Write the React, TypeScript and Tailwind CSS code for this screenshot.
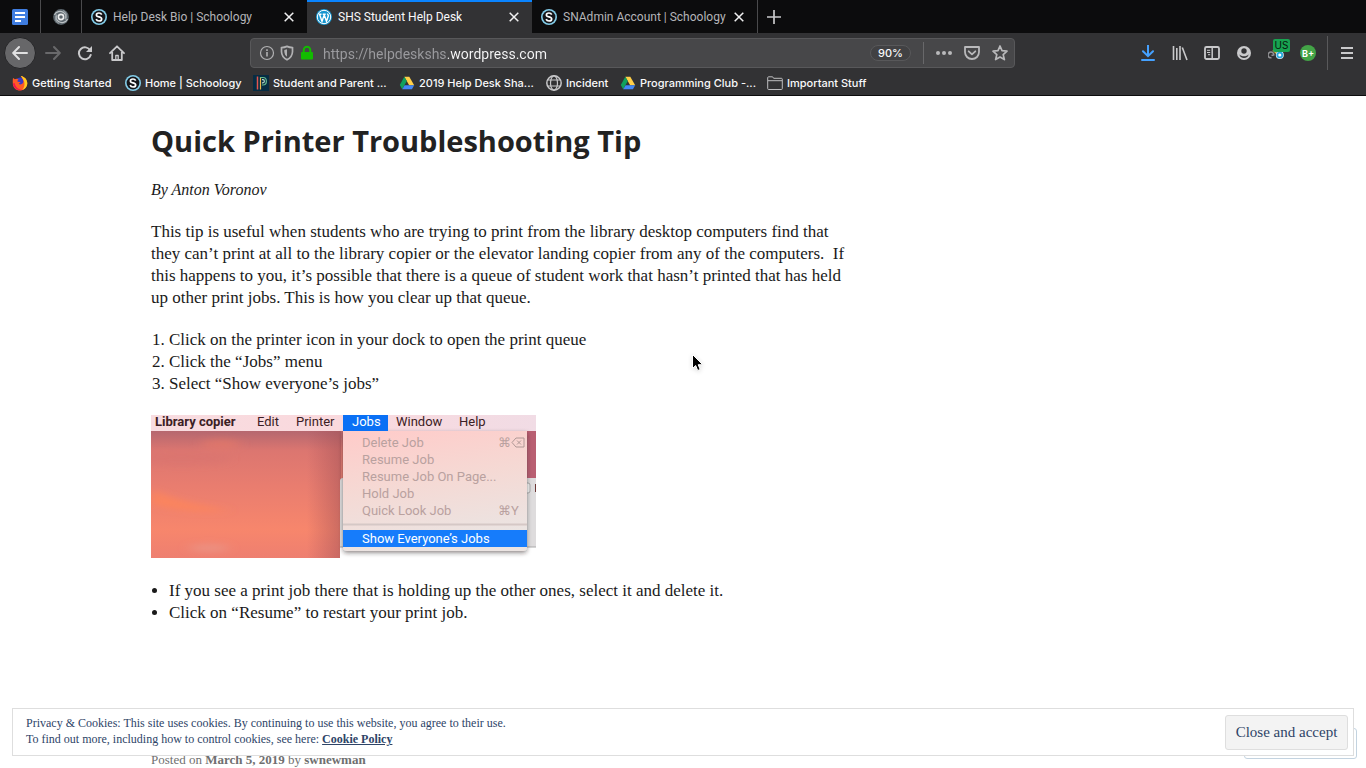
import type { ReactNode } from "react";

function DocsIcon() {
  return (
    <svg width="16" height="16" viewBox="0 0 16 16" aria-hidden="true">
      <rect width="16" height="16" rx="1.5" fill="#3f7de0" />
      <path d="M3 3h10v2H3zM3 7h10v2H3zM3 11h6v2H3z" fill="#fff" />
    </svg>
  );
}

function SwirlIcon() {
  return (
    <svg width="16" height="16" viewBox="0 0 16 16" aria-hidden="true">
      <circle cx="8" cy="8" r="7.900" fill="#5b656c" />
      <g fill="none" strokeWidth="1.200">
        <circle cx="8" cy="8" r="2.600" stroke="#eceded" strokeWidth="1.600" />
        <path d="M1.500 6C3 2.500 7.500 1.500 10.500 3.500c2.500 1.700 2.700 4.500 1.500 6.500M14.500 10c-1.500 3.500-6 4.500-9 2.500C3 10.800 2.800 8 4 6" stroke="#bbc1c4" />
        <path d="M6 14.500C2.500 13 1.500 9 3.500 5.500M10 1.500c3.500 1.500 4.500 5.500 2.500 9" stroke="#929a9f" />
      </g>
    </svg>
  );
}

function SchoologyIcon() {
  return (
    <svg width="16" height="16" viewBox="0 0 16 16" aria-hidden="true">
      <circle cx="8" cy="8" r="8" fill="#83cde9" />
      <circle cx="8" cy="8" r="6.4" fill="#15161a" />
      <path d="M10.7 5.7C10.1 4.5 9.2 4 8 4 6.5 4 5.4 4.8 5.4 5.9c0 2.7 5.3 1.3 5.3 4.1C10.7 11.2 9.6 12 8 12c-1.400 0-2.400-.6-2.900-1.800" fill="none" stroke="#fff" strokeWidth="1.7" />
    </svg>
  );
}

function WordPressIcon() {
  return (
    <svg width="16" height="16" viewBox="0 0 16 16" aria-hidden="true">
      <circle cx="8" cy="8" r="8" fill="#1795cf" />
      <circle cx="8" cy="8" r="6.700" fill="none" stroke="#fff" strokeWidth="1" />
      <path d="M2.700 5.200h2.800M3.500 5.300l2.500 7 2-5.800M6.700 5.200h3M8 5.300l2.500 7 1.800-5.200c.3-1-.8-1.700-.8-2.600" fill="none" stroke="#fff" strokeWidth="1.400" />
    </svg>
  );
}

function FirefoxIcon() {
  return (
    <svg width="16" height="16" viewBox="0 0 16 16" aria-hidden="true">
      <circle cx="8.300" cy="8.500" r="6" fill="#3b3bc4" />
      <path d="M1 3c.6.2 1.300.7 1.800 1.200C4 3.300 5.600 3.500 6.500 4.500 5.500 5 5.300 6 5.700 6.700c1 .2 2 .1 2.800.2-.2 1-1.300 1.200-1.800 1.700.8 1.500 3.300.8 4.300-.6.8-1.600.2-3.600-1-5L8.800 1c4 .6 6.600 3.800 6.500 7.600-.2 4-3.300 7-7.200 7C3.900 15.600.8 12.500.8 8.500.8 6.500.6 5 1 3z" fill="#ff5a26" />
      <path d="M8.800 1c4 .6 6.600 3.800 6.500 7.600-.2 3-2 5.500-5 6.500 2.800-3.600 3-7.600.3-11.600z" fill="#ffcb20" />
      <path d="M1 8.500c.3 5 5 7.500 9.300 6.500C6.500 14.500 3.400 12.300 2.600 8z" fill="#f0154f" />
    </svg>
  );
}

function PowerSchoolIcon() {
  return (
    <svg width="16" height="16" viewBox="0 0 16 16" aria-hidden="true">
      <rect width="16" height="16" fill="#062c43" />
      <g fill="none" strokeWidth="1.200">
        <path d="M4.500 1.500v13" stroke="#e5554f" strokeWidth="1.500" />
        <path d="M7.500 2v12.500" stroke="#e9b84a" />
        <path d="M7 2.500h3c4.500 0 4.500 7.500 0 7.500H9" stroke="#65b98e" />
        <path d="M9 4.700h1c1.800 0 1.800 3.100 0 3.100H9" stroke="#b6d8ca" />
      </g>
    </svg>
  );
}

function DriveIcon() {
  return (
    <svg width="16" height="16" viewBox="0 0 16 16" aria-hidden="true">
      <path d="M5.300 1.800h5L15.200 10.300h-5z" fill="#ffcf48" />
      <path d="M5.300 1.800 7.800 6.100 3.200 14.300.8 10.100z" fill="#11a05c" />
      <path d="M5.600 10.200h9.600l-2.300 4.100H3.200z" fill="#4387f5" />
    </svg>
  );
}

function GlobeIcon() {
  return (
    <svg width="16" height="16" viewBox="0 0 16 16" fill="none" stroke="#c7c7c9" strokeWidth="1.200" aria-hidden="true">
      <circle cx="8" cy="8" r="7.200" strokeWidth="1.500" />
      <ellipse cx="8" cy="8" rx="3.500" ry="7.200" />
      <path d="M1.500 5h13M1.500 11h13" />
    </svg>
  );
}

function FolderIcon() {
  return (
    <svg width="16" height="16" viewBox="0 0 16 16" fill="none" stroke="#bdbdbf" aria-hidden="true">
      <path d="M.7 13.500V2.700q0-.9.9-.9h4l1 1.500h7.800q.9 0 .9.900v9.300q0 1-.9 1H1.600q-.9 0-.9-1zM1 5.700h14" />
    </svg>
  );
}

function CloseIcon() {
  return (
    <svg width="10" height="10" viewBox="0 0 10 10" aria-hidden="true">
      <path d="m.7.7 8.600 8.600M9.300.7.7 9.300" stroke="#f1f1f2" strokeWidth="1.500" />
    </svg>
  );
}

function Tab({ icon, label, active = false }: { icon: ReactNode; label: string; active?: boolean }) {
  return (
    <div
      className={
        active
          ? "flex w-[225px] items-center border-t-2 border-[#0a84ff] bg-[#323234] pr-[11px] pb-0.5 pl-[9px] text-[#f9f9fa]"
          : "flex w-[225px] items-center pr-[11px] pl-[9px] text-[#b5b5b8]"
      }
    >
      <button role="tab" aria-selected={active} className="flex min-w-0 flex-1 items-center gap-1.5">
        {icon}
        <span className="truncate">{label}</span>
      </button>
      <button aria-label={`Close ${label}`} className="p-0.5">
        <CloseIcon />
      </button>
    </div>
  );
}

function TabStrip() {
  return (
    <div role="tablist" className="flex h-[33px] bg-[#0c0c0d] font-[Roboto,sans-serif] text-[12px]">
      <button role="tab" aria-selected={false} aria-label="Docs" className="flex w-[41px] items-center justify-center border-r border-[#4a4a4c]">
        <DocsIcon />
      </button>
      <button role="tab" aria-selected={false} aria-label="Pinned page" className="flex w-[41px] items-center justify-center border-r border-[#4a4a4c]">
        <SwirlIcon />
      </button>
      <Tab icon={<SchoologyIcon />} label="Help Desk Bio | Schoology" />
      <Tab icon={<WordPressIcon />} label="SHS Student Help Desk" active />
      <Tab icon={<SchoologyIcon />} label="SNAdmin Account | Schoology" />
      <button aria-label="New tab" className="flex w-8 items-center justify-center border-l border-[#4a4a4c]">
        <svg width="14" height="14" viewBox="0 0 14 14" aria-hidden="true">
          <path d="M7 0v14M0 7h14" stroke="#c9c9cb" strokeWidth="1.700" />
        </svg>
      </button>
    </div>
  );
}

function ToolButton({ label, children }: { label: string; children: ReactNode }) {
  return (
    <button aria-label={label} className="flex w-8 items-center justify-center">
      {children}
    </button>
  );
}

function AddressBar() {
  return (
    <div className="ml-[117px] flex h-[30px] min-w-0 flex-1 items-center rounded-sm border border-[#58585a] bg-[#474749] pl-2">
      <button aria-label="Site information" className="flex items-center gap-1">
        <svg width="16" height="16" viewBox="0 0 16 16" fill="none" stroke="#b1b1b3" aria-hidden="true">
          <circle cx="8" cy="8" r="6.500" strokeWidth="1.200" />
          <path d="M8 7v4.500M8 4.200V6" strokeWidth="1.600" />
        </svg>
        <svg width="16" height="16" viewBox="0 0 16 16" aria-hidden="true">
          <path d="M2.500 2.700Q5.500 2.500 8 1.400q2.500 1.100 5.500 1.300v4Q13.300 12 8 14.800 2.700 12 2.500 6.700z" fill="none" stroke="#b1b1b3" strokeWidth="1.700" />
          <path d="M8 4.300v7.500Q5.500 10 5.300 7V5z" fill="#b1b1b3" />
        </svg>
        <svg width="16" height="16" viewBox="0 0 16 16" aria-hidden="true">
          <path d="M4.700 8V5a3.300 3.300 0 0 1 6.600 0v3" fill="none" stroke="#12bc00" strokeWidth="2" />
          <rect x="2" y="7" width="12" height="7.500" rx="1" fill="#12bc00" />
        </svg>
      </button>
      <input
        aria-label="Address"
        defaultValue="https://helpdeskshs.wordpress.com"
        className="ml-2 h-7 min-w-0 flex-1 bg-[linear-gradient(90deg,#9b9b9f_125px,#f9f9fa_125px)] bg-clip-text pt-0.5 font-[Roboto,sans-serif] text-[14px] text-transparent outline-none"
      />
      <button className="h-4 w-[41px] rounded-full border border-[#58585a] bg-[#414143] text-[11px] leading-[14px] font-medium text-[#f9f9fa]">
        90%
      </button>
      <div className="ml-3 h-[22px] w-px bg-[#68686a]" />
      <div className="flex items-center gap-3 pr-1.5 pl-3">
        <button aria-label="Page actions">
          <svg width="16" height="16" viewBox="0 0 16 16" fill="#b9b9bb" aria-hidden="true">
            <circle cx="2" cy="8" r="2" />
            <circle cx="8" cy="8" r="2" />
            <circle cx="14" cy="8" r="2" />
          </svg>
        </button>
        <button aria-label="Save to Pocket">
          <svg width="16" height="16" viewBox="0 0 16 16" fill="none" stroke="#b9b9bb" strokeWidth="1.800" strokeLinecap="round" strokeLinejoin="round" aria-hidden="true">
            <path d="M1 2h14v5c0 4-3 7-7 7S1 11 1 7z" />
            <path d="m4.700 6.300 3.300 3 3.300-3" />
          </svg>
        </button>
        <button aria-label="Bookmark this page">
          <svg width="16" height="16" viewBox="0 0 16 16" fill="none" stroke="#b9b9bb" strokeWidth="1.700" strokeLinejoin="round" aria-hidden="true">
            <path d="m8 1 2 4.700 5 .5-3.800 3.400 1.200 5L8 12l-4.400 2.600 1.200-5L1 6.200l5-.5z" />
          </svg>
        </button>
      </div>
    </div>
  );
}

function Toolbar() {
  return (
    <div className="flex h-10 items-center pl-1">
      <button aria-label="Back" className="mr-px flex size-8 items-center justify-center rounded-full border border-[#252527] bg-[#676769]">
        <svg width="16" height="16" viewBox="0 0 16 16" fill="none" stroke="#e0e0e1" strokeWidth="2" strokeLinecap="round" strokeLinejoin="round" aria-hidden="true">
          <path d="M15 8H1.500M7 2 1.200 8 7 14" />
        </svg>
      </button>
      <ToolButton label="Forward">
        <svg width="16" height="16" viewBox="0 0 16 16" fill="none" stroke="#69696b" strokeWidth="2" strokeLinecap="round" strokeLinejoin="round" aria-hidden="true">
          <path d="M1 8h13.500M9 2l5.800 6L9 14" />
        </svg>
      </ToolButton>
      <ToolButton label="Reload">
        <svg width="16" height="16" viewBox="0 0 16 16" fill="none" stroke="#c9c9cb" strokeWidth="2" aria-hidden="true">
          <path d="M13.200 5.400A6 6 0 1 0 13.700 10" strokeLinecap="round" />
          <path d="M15 1v6H9z" fill="#c9c9cb" stroke="none" />
        </svg>
      </ToolButton>
      <ToolButton label="Home">
        <svg width="16" height="16" viewBox="0 0 16 16" fill="none" stroke="#c9c9cb" strokeWidth="1.800" strokeLinecap="round" strokeLinejoin="round" aria-hidden="true">
          <path d="M1 8.200 8 1.300l7 6.900M3.200 7v8h9.600V7" />
          <path d="M6.800 15v-4.500h2.400V15" strokeWidth="1.300" />
        </svg>
      </ToolButton>
      <AddressBar />
      <div className="ml-[117px] flex h-full items-center">
        <ToolButton label="Downloads">
          <svg width="14" height="16" viewBox="0 0 14 16" fill="none" stroke="#45a1ff" strokeWidth="2" aria-hidden="true">
            <path d="M7 0v11M2 6.200l5 5 5-5M1 15h12" strokeLinecap="round" />
          </svg>
        </ToolButton>
        <ToolButton label="Library">
          <svg width="16" height="16" viewBox="0 0 16 16" stroke="#c9c9cb" strokeWidth="1.600" aria-hidden="true">
            <path d="M1.500 1v14M4.800 3v12M8 1v14M10.300 2.500 15 15" />
          </svg>
        </ToolButton>
        <ToolButton label="Sidebars">
          <svg width="16" height="16" viewBox="0 0 16 16" fill="none" stroke="#c9c9cb" aria-hidden="true">
            <rect x="1" y="2" width="14" height="12" rx="1.500" strokeWidth="1.800" />
            <path d="M8.200 2v12" strokeWidth="1.500" />
            <path d="M3 5.300h3.200M3 7.500h3.200M4 9.700h2.200" />
          </svg>
        </ToolButton>
        <ToolButton label="Account">
          <svg width="16" height="16" viewBox="0 0 16 16" aria-hidden="true">
            <circle cx="8" cy="8" r="7" fill="#c9c9cb" />
            <circle cx="8" cy="6" r="2.700" fill="#323234" />
            <path d="M3.500 9.200C5 12 11 12 12.500 9.200c0 5-9 5-9 0z" fill="#323234" />
          </svg>
        </ToolButton>
        <button aria-label="Proxy extension, US" className="relative flex w-8 items-center justify-center">
          <svg width="16" height="16" viewBox="0 0 16 16" aria-hidden="true">
            <path d="M3.500 12.800a2.900 2.900 0 1 1 2.300-2.500M3.500 10.200h2" fill="none" stroke="#929295" strokeWidth="1.500" />
            <path d="m5 5 4 4 3-3" stroke="#d6bc3f" fill="none" strokeWidth="1.500" />
            <circle cx="11.800" cy="10" r="4" fill="#d3eefa" />
            <circle cx="11.800" cy="10" r="2.400" fill="#fff" stroke="#27a9dc" strokeWidth="1.700" />
          </svg>
          <span className="absolute -top-1.5 left-[13px] h-[13px] w-[17px] rounded-[2px] bg-[#18a351] text-[10px] leading-[13px] text-[#06180d]">US</span>
        </button>
        <button aria-label="Grade extension" className="mx-2 flex size-4 items-center justify-center rounded-full bg-[#43a447] text-[9px] leading-none font-bold text-white">
          B+
        </button>
        <div className="ml-[3px] h-[34px] w-px bg-[#59595b]" />
        <button aria-label="Open menu" className="mr-[13px] ml-[13px]">
          <svg width="12" height="12" viewBox="0 0 12 12" stroke="#c9c9cb" strokeWidth="1.800" aria-hidden="true">
            <path d="M0 1h12M0 6h12M0 11h12" />
          </svg>
        </button>
      </div>
    </div>
  );
}

const bookmarks = [
  { label: "Getting Started", icon: <FirefoxIcon />, width: "w-[113px]" },
  { label: "Home | Schoology", icon: <SchoologyIcon />, width: "w-[128px]" },
  { label: "Student and Parent ...", icon: <PowerSchoolIcon />, width: "w-[146px]" },
  { label: "2019 Help Desk Sha...", icon: <DriveIcon />, width: "w-[147px]" },
  { label: "Incident", icon: <GlobeIcon />, width: "w-[74px]" },
  { label: "Programming Club -...", icon: <DriveIcon />, width: "w-[147px]" },
  { label: "Important Stuff", icon: <FolderIcon />, width: "w-[113px]" },
];

function BookmarksBar() {
  return (
    <nav aria-label="Bookmarks" className="flex h-[22px] items-center pb-0.5 pl-3 text-[11px] font-medium text-[#f9f9fa]">
      {bookmarks.map(({ label, icon, width }) => (
        <a key={label} href="#bookmark" className={`flex shrink-0 items-center gap-1 whitespace-nowrap ${width}`}>
          {icon}
          {label}
        </a>
      ))}
    </nav>
  );
}

function MenuIllustration() {
  return (
    <svg width="385" height="143" viewBox="0 0 385 143" role="img" aria-label="Jobs menu with Show Everyone's Jobs selected" className="mt-5 block font-[Roboto,sans-serif]">
      <defs>
        <linearGradient id="sky" x1="0" y1="0" x2="0" y2="1">
          <stop offset=".1" stopColor="#b2666f" />
          <stop offset=".25" stopColor="#dc7670" />
          <stop offset=".5" stopColor="#e97d6f" />
          <stop offset=".8" stopColor="#f7866c" />
          <stop offset="1" stopColor="#ee7f70" />
        </linearGradient>
        <linearGradient id="edge" x1="0" y1="0" x2="1" y2="0">
          <stop offset=".82" stopColor="#a45058" stopOpacity="0" />
          <stop offset="1" stopColor="#a05055" stopOpacity=".5" />
        </linearGradient>
        <linearGradient id="menu" x1="0" y1="0" x2=".25" y2="1">
          <stop offset="0" stopColor="#ffcbc9" />
          <stop offset=".5" stopColor="#f5d9d4" />
          <stop offset="1" stopColor="#ebe4e2" />
        </linearGradient>
        <linearGradient id="bar" x1="0" y1="0" x2="1" y2="0">
          <stop offset="0" stopColor="#f8dce0" />
          <stop offset=".5" stopColor="#fad9dd" />
          <stop offset="1" stopColor="#f1dce5" />
        </linearGradient>
        <filter id="blur" x="-50%" y="-100%" width="200%" height="300%">
          <feGaussianBlur stdDeviation="6 3" />
        </filter>
        <filter id="shadow" x="-10%" y="-10%" width="120%" height="125%">
          <feDropShadow dx="0" dy="2" stdDeviation="2" floodColor="#252020" floodOpacity=".5" />
        </filter>
      </defs>
      <rect width="385" height="143" fill="url(#sky)" />
      <g filter="url(#blur)">
        <path d="M0 74q20 10 50 16t30 5q-30 5-80-5z" fill="#ff865a" opacity=".75" />
        <ellipse cx="70" cy="29" rx="20" ry="5" fill="#ee7a66" opacity=".5" />
        <ellipse cx="30" cy="44" rx="50" ry="7" fill="#d7726f" opacity=".4" />
        <ellipse cx="58" cy="133" rx="20" ry="4" fill="#ea9789" opacity=".7" />
      </g>
      <rect width="190" height="143" fill="url(#edge)" />
      <rect x="372" y="16" width="13" height="49" fill="#b95f72" />
      <path d="M189 143V66q0-3 3-3h193v80z" fill="#dedcdd" />
      <path d="M189 132h196v11H189z" fill="#fff" />
      <path d="M189 132h196" stroke="#aaa" />
      <rect x="372" y="68" width="7" height="10" rx="2" fill="#f3f3f3" stroke="#a9a9a9" />
      <path d="M384.500 69v8" stroke="#6c3836" />
      <rect width="385" height="16" fill="url(#bar)" />
      <path d="M192 16h184v116q0 4-4 4H196q-4 0-4-4z" fill="url(#menu)" filter="url(#shadow)" />
      <path d="M192 0h45v16h-45z" fill="#0a70f5" />
      <path d="M192 109.500h184" stroke="#d5c8c6" strokeWidth="2" />
      <path d="M192 115h184v17H192z" fill="#167cfb" />
      <g fontSize="13" fill="#3b2024">
        <text x="4" y="11" fontWeight="700">Library copier</text>
        <text x="106" y="11">Edit</text>
        <text x="145" y="11">Printer</text>
        <text x="201" y="11" fill="#fff">Jobs</text>
        <text x="245" y="11">Window</text>
        <text x="308" y="11">Help</text>
      </g>
      <g fontSize="13" fill="#b9a19f">
        <text x="211" y="32">Delete Job</text>
        <text x="211" y="49">Resume Job</text>
        <text x="211" y="66">Resume Job On Page...</text>
        <text x="211" y="83">Hold Job</text>
        <text x="211" y="100">Quick Look Job</text>
        <text x="347" y="32">⌘</text>
        <text x="347" y="100">⌘Y</text>
        <text x="211" y="128" fill="#fff">Show Everyone’s Jobs</text>
      </g>
      <path d="m361 27.500 4-4.500h8v9h-8zM366 25.500l4 4M370 25.500l-4 4" fill="none" stroke="#b09896" />
    </svg>
  );
}

function Article() {
  return (
    <article className="ml-[151px] max-w-[700px] pt-[27px] text-[17px] leading-[22px] text-[#1a1a1a]">
      <h1 className="font-['Open_Sans',sans-serif] text-[29px] leading-9 font-bold text-[#222]">Quick Printer Troubleshooting Tip</h1>
      <p className="mt-5 text-[16px] leading-[22px] italic">By Anton Voronov</p>
      <p className="mt-5 whitespace-nowrap">
        This tip is useful when students who are trying to print from the library desktop computers find that
        <br />
        they can’t print at all to the library copier or the elevator landing copier from any of the computers.&nbsp; If
        <br />
        this happens to you, it’s possible that there is a queue of student work that hasn’t printed that has held
        <br />
        up other print jobs. This is how you clear up that queue.
      </p>
      <ol className="mt-5 list-decimal pl-[18px]">
        <li>Click on the printer icon in your dock to open the print queue</li>
        <li>Click the “Jobs” menu</li>
        <li>Select “Show everyone’s jobs”</li>
      </ol>
      <MenuIllustration />
      <ul className="mt-[22px] list-disc pl-[18px]">
        <li>If you see a print job there that is holding up the other ones, select it and delete it.</li>
        <li>Click on “Resume” to restart your print job.</li>
      </ul>
      <footer className="mt-[125px] text-[13px] leading-[22px] text-[#6f6f6f]">
        Posted on <a href="#date" className="font-bold">March 5, 2019</a> by <a href="#author" className="font-bold">swnewman</a>
      </footer>
    </article>
  );
}

function CookieNotice() {
  return (
    <>
      <div className="fixed right-[9px] bottom-[9px] h-[31px] w-[113px] rounded-[3px] border border-[#c3d3e0] bg-white" />
      <aside aria-label="Cookie notice" className="fixed right-3 bottom-3 left-3 flex h-12 items-center justify-between border border-[#dedede] bg-white pr-[5px] pl-[13px] text-[#2e4467]">
        <p className="pb-0.5 text-[12px] leading-4">
          Privacy &amp; Cookies: This site uses cookies. By continuing to use this website, you agree to their use.
          <br />
          To find out more, including how to control cookies, see here:{" "}
          <a href="#cookie-policy" className="font-bold underline">Cookie Policy</a>
        </p>
        <button className="h-[35px] w-[123px] rounded-[3px] border border-[#dedede] bg-[#f3f3f3] text-[15px]">Close and accept</button>
      </aside>
    </>
  );
}

export default function App() {
  return (
    <div className="flex h-screen flex-col overflow-hidden bg-white">
      <header className="shrink-0 border-b border-[#0c0c0d] bg-[#323234] font-[Inter,sans-serif]">
        <TabStrip />
        <Toolbar />
        <BookmarksBar />
      </header>
      <main className="min-h-0 flex-1 overflow-hidden font-['Liberation_Serif',serif]">
        <Article />
        <CookieNotice />
      </main>
      <svg width="14" height="20" viewBox="0 0 14 20" aria-hidden="true" className="pointer-events-none absolute top-[353px] left-[691px] drop-shadow-sm">
        <path d="M1.500 1.500v14l3.200-3 2 5 2.500-1-2-4.800h4.500z" fill="#000" stroke="#fff" />
      </svg>
    </div>
  );
}
